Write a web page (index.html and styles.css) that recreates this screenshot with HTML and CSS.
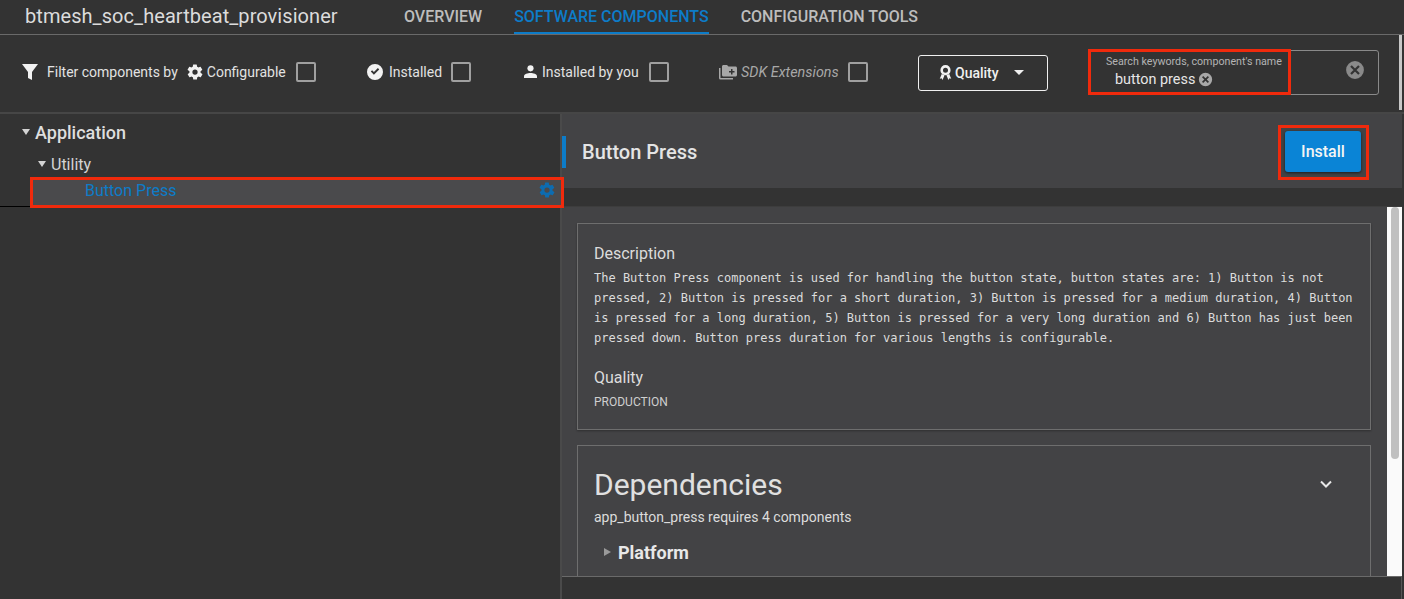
FILE: index.html
```html
<!DOCTYPE html>
<html lang="en">
<head>
    <meta charset="UTF-8">
    <title>Software Components</title>
    <link rel="stylesheet" href="styles.css">
</head>
<body>
    <header class="topbar">
        <h1 class="project">btmesh_soc_heartbeat_provisioner</h1>
        <nav class="tabs">
            <a class="tab" href="javascript:;">Overview</a>
            <a class="tab active" href="javascript:;">Software Components</a>
            <a class="tab" href="javascript:;">Configuration Tools</a>
        </nav>
    </header>

    <section class="filters">
        <div class="filter filter-first">
            <svg class="icon funnel" viewBox="0 0 16 16"><path d="M0 0h16L10 8v8l-4-2V8z"/></svg>
            <span class="filter-by">Filter components by</span>
            <svg class="icon gear" viewBox="0 0 24 24"><path d="M19.4 13a7.5 7.5 0 0 0 0-2l2.1-1.7a.5.5 0 0 0 .1-.6l-2-3.5a.5.5 0 0 0-.6-.2l-2.5 1a7.3 7.3 0 0 0-1.7-1l-.4-2.6a.5.5 0 0 0-.5-.4h-4a.5.5 0 0 0-.5.4l-.4 2.6a7.3 7.3 0 0 0-1.7 1l-2.5-1a.5.5 0 0 0-.6.2l-2 3.5a.5.5 0 0 0 .1.6L4.6 11a7.5 7.5 0 0 0 0 2l-2.1 1.7a.5.5 0 0 0-.1.6l2 3.5c.1.2.4.3.6.2l2.5-1c.5.4 1.1.7 1.7 1l.4 2.6c0 .2.2.4.5.4h4c.3 0 .5-.2.5-.4l.4-2.6c.6-.3 1.2-.6 1.7-1l2.5 1c.2.1.5 0 .6-.2l2-3.5a.5.5 0 0 0-.1-.6zM12 15.500a3.500 3.500 0 1 1 0-7 3.500 3.500 0 0 1 0 7z"/></svg>
            <span>Configurable</span>
            <span class="checkbox"></span>
        </div>
        <div class="filter filter-installed">
            <svg class="icon check" viewBox="0 0 16 16"><path fill-rule="evenodd" d="M8 0a8 8 0 1 1 0 16A8 8 0 0 1 8 0zm4.200 5.400-1.300-1.300-4 4-1.800-1.800-1.300 1.300 3.100 3.100z"/></svg>
            <span>Installed</span>
            <span class="checkbox"></span>
        </div>
        <div class="filter filter-you">
            <svg class="icon person" viewBox="0 0 14 14"><circle cx="7" cy="3.600" r="3.300"/><path d="M0 14v-2c0-2.400 4-3.500 7-3.500s7 1.100 7 3.500v2z"/></svg>
            <span>Installed by you</span>
            <span class="checkbox"></span>
        </div>
        <div class="filter filter-sdk">
            <svg class="icon folder" viewBox="0 0 18 16"><path d="M0 4h1.500v10H14v1.500H1.500A1.500 1.500 0 0 1 0 14z"/><path fill-rule="evenodd" d="M3 2.500C3 1.700 3.700 1 4.500 1H8l1.500 1.500h7c.8 0 1.500.7 1.500 1.500v7c0 .8-.7 1.500-1.500 1.500h-12C3.700 12.500 3 11.800 3 11zM12 5v2h-2v1.500h2v2h1.500v-2h2V7h-2V5z"/></svg>
            <em>SDK Extensions</em>
            <span class="checkbox"></span>
        </div>
        <button class="quality">
            <svg class="ribbon" viewBox="0 0 14 16"><path fill-rule="evenodd" d="M7 0a5.500 5.500 0 1 1 0 11A5.500 5.500 0 0 1 7 0zm0 2.800a2.700 2.700 0 1 0 0 5.400 2.700 2.700 0 0 0 0-5.400z"/><path d="M3 9.500.8 14.600l2-.5 1 1.900L6 11zM11 9.500l2.200 5.100-2-.5-1 1.900L8 11z"/></svg>
            <span>Quality</span>
            <span class="caret"></span>
        </button>
        <div class="search">
            <div class="search-field">
                <label>Search keywords, component's name</label>
                <div class="search-value">
                    <span>button press</span>
                    <svg class="clear-small" viewBox="0 0 14 14"><circle cx="7" cy="7" r="7"/><path d="M4.300 4.300l5.400 5.400M9.700 4.300l-5.400 5.400"/></svg>
                </div>
            </div>
            <svg class="clear-big" viewBox="0 0 20 20"><circle cx="10" cy="10" r="10"/><path d="M6 6l8 8M14 6l-8 8"/></svg>
        </div>
        <div class="bar-scroll"></div>
    </section>

    <main class="split">
        <aside class="tree">
            <div class="tree-app"><span class="arrow"></span>Application</div>
            <div class="tree-cat"><span class="arrow"></span>Utility</div>
            <div class="tree-item">
                <span>Button Press</span>
                <svg class="item-gear" viewBox="0 0 24 24"><path d="M19.400 13a7.500 7.500 0 0 0 0-2l2.100-1.700a.5.5 0 0 0 .1-.6l-2-3.500a.5.5 0 0 0-.6-.2l-2.500 1a7.300 7.300 0 0 0-1.700-1l-.4-2.600a.5.5 0 0 0-.5-.4h-4a.5.5 0 0 0-.5.4l-.4 2.600a7.300 7.300 0 0 0-1.700 1l-2.500-1a.5.5 0 0 0-.6.2l-2 3.500a.5.5 0 0 0 .1.6L4.600 11a7.500 7.500 0 0 0 0 2l-2.100 1.700a.5.5 0 0 0-.1.6l2 3.500c.1.2.4.3.6.2l2.500-1c.5.4 1.100.7 1.700 1l.4 2.600c0 .2.2.4.5.4h4c.3 0 .5-.2.5-.4l.4-2.600c.6-.3 1.200-.6 1.700-1l2.500 1c.2.1.5 0 .6-.2l2-3.500a.5.5 0 0 0-.1-.6zM12 15.500a3.500 3.500 0 1 1 0-7 3.500 3.500 0 0 1 0 7z"/></svg>
            </div>
            <div class="tree-rule"></div>
        </aside>

        <section class="detail">
            <div class="detail-head">
                <h2>Button Press</h2>
                <div class="install-mark"><button class="install">Install</button></div>
            </div>
            <div class="detail-gap"></div>
            <div class="detail-body">
                <div class="cards">
                    <article class="card card-info">
                        <h3>Description</h3>
                        <p class="desc">The Button Press component is used for handling the button state, button states are: 1) Button is not pressed, 2) Button is pressed for a short duration, 3) Button is pressed for a medium duration, 4) Button is pressed for a long duration, 5) Button is pressed for a very long duration and 6) Button has just been pressed down. Button press duration for various lengths is configurable.</p>
                        <h3 class="quality-title">Quality</h3>
                        <p class="quality-value">PRODUCTION</p>
                    </article>
                    <article class="card card-deps">
                        <div class="deps-head">
                            <h2>Dependencies</h2>
                            <svg class="chevron" viewBox="0 0 12 8"><path d="M1 1.500l5 5 5-5"/></svg>
                        </div>
                        <p class="deps-note">app_button_press requires 4 components</p>
                        <div class="deps-group"><span class="arrow-right"></span>Platform</div>
                    </article>
                </div>
                <div class="scroll"><div class="scroll-thumb"></div></div>
            </div>
            <div class="detail-foot"></div>
        </section>
    </main>
</body>
</html>
```

FILE: styles.css
```css
* {
    padding: 0;
    margin: 0;
    box-sizing: border-box;
}

html, body {
    height: 100%;
    overflow: hidden;
}

body {
    display: flex;
    flex-direction: column;
    background: #333333;
    color: #e0e0e0;
    font-family: Roboto, "Liberation Sans", sans-serif;
    font-size: 14px;
}

/* top bar */
.topbar {
    display: flex;
    height: 35px;
    padding-left: 25px;
    border-bottom: 1px solid #6a6a6a;
}

.project {
    width: 379px;
    font-size: 20px;
    font-weight: 400;
    line-height: 32px;
    letter-spacing: 0.06px;
    color: #dcdcdc;
    white-space: nowrap;
}

.tabs {
    display: flex;
    gap: 32px;
}

.tab {
    height: 34px;
    font-size: 16px;
    font-weight: 500;
    line-height: 33px;
    color: #bdbdbd;
    text-decoration: none;
    text-transform: uppercase;
}

.tab.active {
    color: #0d7cc8;
    border-bottom: 2px solid #0d7cc8;
}

/* filters */
.filters {
    position: relative;
    display: flex;
    align-items: center;
    height: 79px;
    padding: 0 0 2px 22px;
    border-bottom: 2px solid #464646;
    color: #e2e2e2;
    font-size: 14px;
}

.filter {
    display: flex;
    align-items: center;
    height: 20px;
    margin-bottom: 2px;
}

.filter-first { width: 345px; }
.filter-installed { width: 157px; }
.filter-you { width: 195px; }
.filter-sdk { width: 199px; }

.icon {
    flex: none;
    width: 16px;
    height: 16px;
    margin-right: 4px;
    fill: #f2f2f2;
}

.funnel { margin-right: 9px; }
.filter-by { margin-right: 9px; }
.gear { width: 18px; height: 18px; margin: 0 3px 0 -1px; }
.check { margin-right: 6px; }
.person { width: 13px; height: 13px; margin-right: 5px; }
.folder { width: 18px; margin-right: 4px; fill: #a8a8a8; }

.filter-installed .checkbox { margin-left: 9px; }
.filter-sdk .checkbox { margin-left: 9px; }

.filter em {
    margin-top: 1px;
    color: #a8a8a8;
    font-size: 14.4px;
}

.checkbox {
    width: 20px;
    height: 20px;
    margin-left: 10px;
    border: 2px solid #a0a0a0;
    border-radius: 2px;
}

.quality {
    display: flex;
    align-items: center;
    width: 130px;
    height: 36px;
    padding-left: 20px;
    background: none;
    border: 1px solid #f0f0f0;
    border-radius: 3px;
    color: #f0f0f0;
    font: 500 14px Roboto, sans-serif;
}

.ribbon {
    width: 13px;
    height: 15px;
    margin-right: 3px;
    fill: #f2f2f2;
}

.caret {
    margin-left: 15px;
    border-left: 5.5px solid transparent;
    border-right: 5.5px solid transparent;
    border-top: 5px solid #f0f0f0;
}

.search {
    display: flex;
    align-items: center;
    justify-content: space-between;
    width: 291px;
    height: 45px;
    margin-left: 40px;
    padding-right: 13px;
    border: 1px solid #8a8a8a;
    border-radius: 3px;
}

.search-field {
    align-self: flex-start;
    width: 203px;
    height: 46px;
    margin: -2px 0 0 -1px;
    padding: 3px 0 0 15px;
    border: 3px solid #f02a0c;
}

.search-field label {
    display: block;
    font-size: 10.7px;
    line-height: 13px;
    color: #b4b4b4;
    white-space: nowrap;
}

.search-value {
    display: flex;
    align-items: center;
    gap: 3px;
    margin: 3px 0 0 9px;
    font-size: 14.4px;
    line-height: 18px;
    color: #e6e6e6;
}

.clear-small, .clear-big {
    stroke: #333333;
}

.clear-small {
    width: 15px;
    height: 15px;
    margin-top: -1px;
    fill: #a8a8a8;
    stroke-width: 1.6;
}

.clear-big {
    width: 20px;
    height: 20px;
    margin-bottom: 5px;
    fill: #8a8a8a;
    stroke-width: 2.2;
}

.bar-scroll {
    position: absolute;
    top: 0;
    right: 2px;
    width: 3px;
    height: 75px;
    background: #c8c8c8;
}

/* tree + detail */
.split {
    flex: 1;
    display: flex;
    min-height: 0;
}

.tree {
    flex: none;
    width: 562px;
    padding-top: 6px;
    border-right: 2px solid #4a4a4a;
}

.tree-app {
    display: flex;
    align-items: center;
    height: 24px;
    padding-left: 22px;
    font-size: 18px;
    font-weight: 500;
    color: #dedede;
}

.tree-cat {
    display: flex;
    align-items: center;
    height: 20px;
    margin-top: 10px;
    padding-left: 38px;
    font-size: 16px;
    color: #d4d4d4;
}

.arrow {
    margin-right: 5px;
    border-left: 4.5px solid transparent;
    border-right: 4.5px solid transparent;
    border-top: 6px solid #d4d4d4;
}

.tree-item {
    position: relative;
    z-index: 1;
    display: flex;
    align-items: center;
    justify-content: space-between;
    width: 534px;
    height: 31px;
    margin: 3px 0 0 30px;
    padding: 0 5px 5px 52px;
    background: #4a4a4c;
    border: 3px solid #f02a0c;
    color: #0d7cc8;
    font-size: 16px;
}

.item-gear {
    width: 18px;
    height: 18px;
    fill: #0d6cb0;
}

.tree-rule {
    width: 30px;
    height: 1px;
    margin-top: -2px;
    background: #000000;
}

.detail {
    flex: 1;
    display: flex;
    flex-direction: column;
    min-width: 0;
    margin-right: 2px;
}

.detail-head {
    position: relative;
    display: flex;
    align-items: center;
    justify-content: space-between;
    height: 74px;
    padding: 0 33px 0 20px;
    background: #434345;
}

.detail-head::before {
    content: "";
    position: absolute;
    left: 0;
    top: 22px;
    width: 4px;
    height: 32px;
    background: #0d7cc8;
}

.detail-head h2 {
    margin-top: 2px;
    font-size: 20px;
    font-weight: 500;
    color: #e4e4e4;
}

.install-mark {
    margin-top: 3px;
    padding: 3px 5px 5px 4px;
    border: 3px solid #f02a0c;
}

.install {
    display: block;
    width: 76px;
    height: 41px;
    background: #0a84d6;
    border: none;
    border-radius: 3px;
    box-shadow: 0 1px 3px rgba(0, 0, 0, 0.6);
    color: #f4f4f4;
    font: 500 16px Roboto, sans-serif;
}

.detail-gap {
    height: 19px;
    border-bottom: 1px solid #3d3d3d;
}

.detail-body {
    flex: 1;
    display: flex;
    min-height: 0;
    overflow: hidden;
    background: #434345;
}

.cards {
    flex: 1;
    min-width: 0;
    padding: 16px 16px 0 15px;
}

.card {
    border: 1px solid #6e6e6e;
    padding: 0 16px;
}

.card-info {
    height: 207px;
    padding-top: 20px;
    box-shadow: 0 1px 2px rgba(0, 0, 0, 0.3);
}

.card h3 {
    font-size: 16px;
    font-weight: 400;
    line-height: 20px;
    color: #dcdcdc;
}

.desc {
    margin-top: 4px;
    font-family: "DejaVu Sans Mono", "Liberation Mono", monospace;
    font-size: 12px;
    line-height: 20px;
    color: #dcdcdc;
}

.card .quality-title {
    margin-top: 20px;
}

.quality-value {
    margin-top: 7px;
    font-size: 12px;
    line-height: 14px;
    color: #cfcfcf;
}

.card-deps {
    height: 200px;
    margin-top: 15px;
}

.deps-head {
    display: flex;
    align-items: center;
    justify-content: space-between;
    height: 28px;
    margin-top: 24px;
    padding-right: 22px;
}

.deps-head h2 {
    font-size: 30px;
    font-weight: 400;
    color: #e0e0e0;
}

.chevron {
    width: 12px;
    height: 8px;
    fill: none;
    stroke: #e8e8e8;
    stroke-width: 2;
}

.deps-note {
    margin-top: 10px;
    font-size: 14px;
    line-height: 18px;
    color: #dcdcdc;
}

.deps-group {
    display: flex;
    align-items: center;
    height: 22px;
    margin-top: 15px;
    padding-left: 10px;
    font-size: 18px;
    font-weight: 700;
    color: #e8e8e8;
}

.arrow-right {
    margin-right: 7px;
    border-top: 4.5px solid transparent;
    border-bottom: 4.5px solid transparent;
    border-left: 7px solid #9a9a9a;
}

.scroll {
    flex: none;
    width: 15px;
    background: #fafafa;
}

.scroll-thumb {
    width: 8px;
    height: 252px;
    margin-left: 4px;
    background: #c0c0c0;
    border-radius: 4px;
}

.detail-foot {
    height: 23px;
    background: #333333;
    border-top: 1px solid #6a6a6a;
    border-right: 1px solid #555555;
}
```
